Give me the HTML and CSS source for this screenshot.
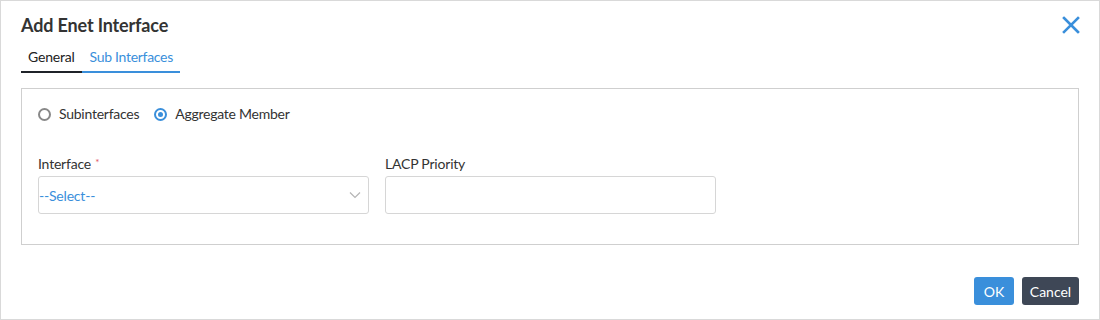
FILE: index.html
```html
<!DOCTYPE html>
<html>
<head>
<meta charset="utf-8">
<link rel="stylesheet" href="styles.css">
</head>
<body>
<div class="dialog">
  <div class="header">
    <h1 class="title">Add Enet Interface</h1>
    <button class="close" aria-label="Close">
      <svg width="18" height="18" viewBox="0 0 18 18"><path d="M2 2 L16 16 M16 2 L2 16" stroke="#3a8fdb" stroke-width="2.6" stroke-linecap="square"/></svg>
    </button>
  </div>
  <div class="tabs">
    <div class="tab active">General</div>
    <div class="tab link">Sub Interfaces</div>
  </div>
  <div class="panel">
    <div class="radios">
      <label class="radio"><span class="circle"></span>Subinterfaces</label>
      <label class="radio"><span class="circle checked"></span>Aggregate Member</label>
    </div>
    <div class="fields">
      <div class="field">
        <div class="label">Interface <span class="req">*</span></div>
        <div class="select">
          <span class="placeholder">--Select--</span>
          <svg class="chev" width="12" height="8" viewBox="0 0 12 8"><path d="M1 1.5 L6 6.5 L11 1.5" fill="none" stroke="#b5b5b5" stroke-width="1.2"/></svg>
        </div>
      </div>
      <div class="field">
        <div class="label">LACP Priority</div>
        <div class="input"></div>
      </div>
    </div>
  </div>
  <div class="footer">
    <button class="btn ok">OK</button>
    <button class="btn cancel">Cancel</button>
  </div>
</div>
</body>
</html>
```
FILE: styles.css
```css
* { box-sizing: border-box; }
html, body { margin: 0; padding: 0; background: #fff; }
body { font-family: Lato, "Open Sans", sans-serif; color: #333; }
.dialog {
  width: 1100px;
  height: 320px;
  border: 1px solid #d9d9d9;
  padding: 0 20px;
  display: flex;
  flex-direction: column;
}
.header {
  display: flex;
  justify-content: space-between;
  align-items: center;
  padding-top: 11px;
  height: 36px;
}
.title {
  margin: 0;
  font-size: 18px;
  font-weight: 700;
  color: #333;
  line-height: 22px;
  letter-spacing: -0.15px;
}
.close {
  border: 0;
  background: none;
  padding: 0;
  margin-right: -3px;
  width: 22px;
  height: 22px;
  display: flex;
  align-items: center;
  justify-content: center;
}
.tabs {
  display: flex;
  margin-top: 7px;
}
.tab {
  font-size: 14px;
  line-height: 18px;
  padding: 4px 7px 5px 7px;
  border-bottom: 2px solid #3a8fdb;
  letter-spacing: -0.2px;
}
.tab.active { color: #222; border-bottom-color: #1f2329; }
.tab.link { color: #3a8fdb; padding: 4px 7px 5px 8px; letter-spacing: -0.3px; }
.panel {
  margin-top: 15px;
  border: 1px solid #cfcfcf;
  padding: 16px 16px 30px 16px;
  height: 157px;
}
.radios {
  display: flex;
  gap: 15px;
  align-items: center;
}
.radio {
  display: flex;
  align-items: center;
  gap: 8px;
  font-size: 14px;
  color: #333;
  line-height: 18px;
  letter-spacing: -0.25px;
}
.circle {
  width: 13px;
  height: 13px;
  border-radius: 50%;
  border: 2px solid #888;
  display: inline-block;
  position: relative;
}
.circle.checked {
  border-color: #3a8fdb;
}
.circle.checked::after {
  content: "";
  position: absolute;
  left: 2px; top: 2px;
  width: 5px; height: 5px;
  border-radius: 50%;
  background: #3a8fdb;
}
.fields {
  display: flex;
  gap: 16px;
  margin-top: 32px;
}
.field { width: 331px; }
.label {
  font-size: 14px;
  line-height: 18px;
  color: #333;
  margin-bottom: 3px;
  letter-spacing: -0.2px;
}
.req { color: #e0525a; font-size: 10px; line-height: 0; position: relative; top: -3px; margin-left: 1px; }
.select, .input {
  height: 38px;
  border: 1px solid #d6d6d6;
  border-radius: 3px;
  display: flex;
  align-items: center;
  justify-content: space-between;
}
.placeholder {
  font-size: 14px;
  color: #3a8fdb;
  letter-spacing: -0.2px;
}
.chev { margin-right: 7px; }
.footer {
  display: flex;
  justify-content: flex-end;
  gap: 8px;
  margin-top: 32px;
}
.btn {
  font-family: Lato, "Open Sans", sans-serif;
  font-size: 14px;
  height: 28px;
  border: 0;
  border-radius: 3px;
  color: #fff;
  padding: 0;
}
.btn.ok { background: #3a8fdb; width: 40px; }
.btn.cancel { background: #3e4756; width: 57px; }
```
